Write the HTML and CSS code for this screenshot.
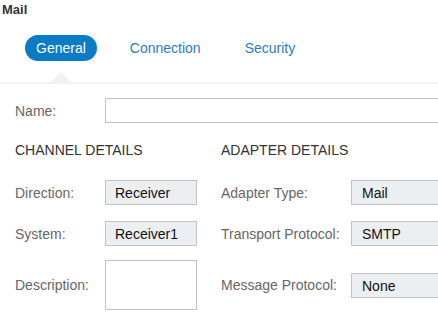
FILE: index.html
```html
<!DOCTYPE html>
<html lang="en">
<head>
  <meta charset="UTF-8">
  <title>Mail</title>
  <link rel="stylesheet" href="styles.css">
</head>
<body>
  <div class="title">Mail</div>
  <div class="tabs">
    <div class="tab active">General</div>
    <div class="tab">Connection</div>
    <div class="tab">Security</div>
  </div>
  <div class="pointer"></div>
  <div class="panel">
    <div class="name-row">
      <span class="label">Name:</span>
      <input class="field name-field" type="text">
    </div>
    <div class="columns">
      <div class="col left">
        <div class="heading">CHANNEL DETAILS</div>
        <div class="row">
          <span class="label">Direction:</span>
          <div class="field ro">Receiver</div>
        </div>
        <div class="row">
          <span class="label">System:</span>
          <div class="field ro">Receiver1</div>
        </div>
        <div class="row tall">
          <span class="label">Description:</span>
          <div class="field area"></div>
        </div>
      </div>
      <div class="col right">
        <div class="heading">ADAPTER DETAILS</div>
        <div class="row">
          <span class="label">Adapter Type:</span>
          <div class="field ro">Mail</div>
        </div>
        <div class="row">
          <span class="label">Transport Protocol:</span>
          <div class="field ro">SMTP</div>
        </div>
        <div class="row tall">
          <span class="label">Message Protocol:</span>
          <div class="field ro">None</div>
        </div>
      </div>
    </div>
  </div>
</body>
</html>
```

FILE: styles.css
```css
body {
  margin: 0;
  background-color: white;
  font-family: "Liberation Sans", Arial, sans-serif;
  overflow: hidden;
}
.title {
  font-size: 13px;
  font-weight: bold;
  color: #333;
  padding: 2px 0 0 2px;
  height: 15px;
}
.tabs {
  display: flex;
  gap: 22px;
  padding: 18px 0 0 25px;
}
.tab {
  height: 26px;
  line-height: 26px;
  padding: 0 11px;
  font-size: 14px;
  color: #2b7cc2;
  border-radius: 13px;
}
.tab.active {
  background-color: #0a7bc4;
  color: white;
}
.pointer {
  width: 0;
  height: 0;
  margin: 11px 0 0 51px;
  border-left: 10px solid transparent;
  border-right: 10px solid transparent;
  border-bottom: 10px solid #f1f1f1;
}
.panel {
  border-top: 2px solid #f1f1f1;
  padding: 14px 0 0 15px;
  overflow: hidden;
}
.label {
  flex-shrink: 0;
  font-size: 14px;
  line-height: 16px;
  color: #666;
}
.field {
  flex-shrink: 0;
  box-sizing: border-box;
  height: 25px;
  border: 1px solid #c3c3c3;
  font-family: inherit;
  font-size: 14px;
  color: #111;
}
.name-row {
  display: flex;
  align-items: center;
  height: 25px;
}
.name-row .label {
  width: 90px;
}
.name-field {
  width: 340px;
  margin: 0;
  padding: 0;
  background: white;
}
.columns {
  display: flex;
}
.col {
  flex-shrink: 0;
  display: flex;
  flex-direction: column;
}
.left {
  width: 206px;
}
.heading {
  font-size: 14px;
  line-height: 16px;
  color: #333;
  margin: 19px 0 22px;
}
.row {
  display: flex;
  align-items: center;
  height: 25px;
  margin-bottom: 16px;
}
.row.tall {
  height: 50px;
  margin-top: -2px;
}
.left .label {
  width: 90px;
}
.right .label {
  width: 130px;
}
.ro {
  background-color: #eceff2;
  line-height: 24px;
  padding-left: 9px;
}
.left .ro {
  width: 92px;
}
.right .ro {
  width: 100px;
  padding-left: 10px;
}
.area {
  width: 92px;
  height: 50px;
  background: white;
}
```
